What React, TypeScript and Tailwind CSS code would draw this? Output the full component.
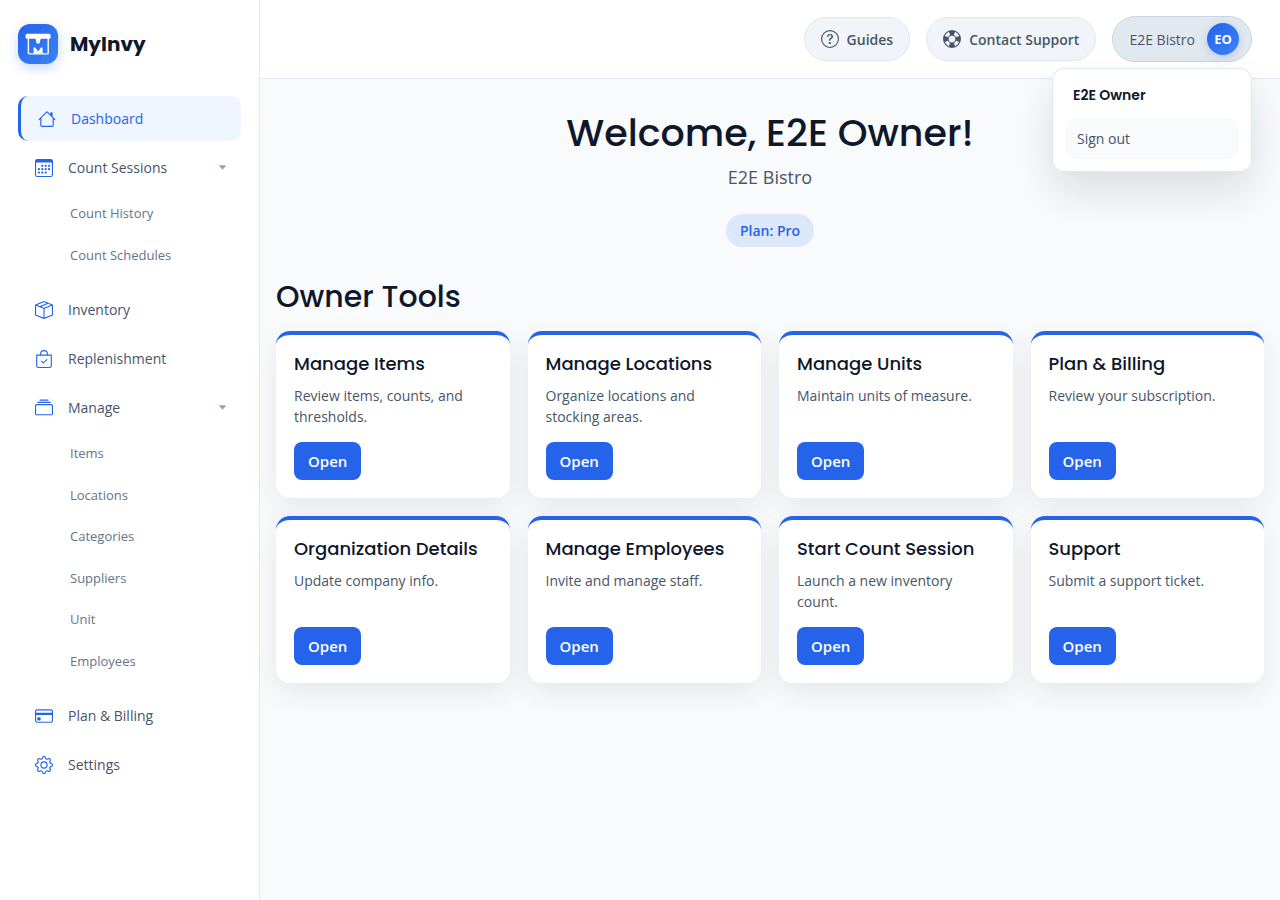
import type { ReactNode } from 'react';
import type { IconType } from 'react-icons';
import {
  BsBagCheck,
  BsBoxSeam,
  BsCalendar3,
  BsCaretDownFill,
  BsCollection,
  BsCreditCard,
  BsGear,
  BsHouse,
  BsLifePreserver,
  BsQuestionCircle,
} from 'react-icons/bs';

function Logo() {
  return (
    <span className="flex size-10 items-center justify-center rounded-xl bg-linear-to-br from-[#2563eb] to-[#3b82f6] shadow-[0_4px_12px_rgba(37,99,235,0.25)]">
      <svg viewBox="0 0 26 22" className="w-[26px]" aria-hidden="true">
        <rect x="0.6" y="0.8" width="25" height="4.9" rx="1.5" fill="#fff" />
        <rect x="3.4" y="4" width="19.8" height="16.9" rx="1" fill="none" stroke="#fff" strokeWidth="1.4" />
        <path fill="#fff" d="M10.3 5h5.6l-1.4 5.600h-2.800zM8.600 20.500V14.500h1.600l2.900 4 2.900-4h1.600v6z" />
      </svg>
    </span>
  );
}

function NavLink({ icon: Icon, label }: { icon: IconType; label: string }) {
  return (
    <a href="#" className="flex h-[45px] items-center gap-[15px] rounded-[10px] px-[17px] text-sm leading-[21px] font-medium text-[#475569]">
      <Icon className="size-[18px] text-[#2563eb]" />
      {label}
    </a>
  );
}

function NavGroup({ icon: Icon, label, items }: { icon: IconType; label: string; items: string[] }) {
  return (
    <div className="flex flex-col gap-1 pb-2">
      <button
        type="button"
        className="flex h-[45px] items-center gap-[15px] rounded-[10px] px-[17px] text-sm leading-[21px] font-medium text-[#475569]"
      >
        <Icon className="size-[18px] text-[#2563eb]" />
        {label}
        <BsCaretDownFill className="mr-[-3px] ml-auto size-[9px] text-[#94a3b8]" />
      </button>
      <ul className="flex flex-col gap-[2px]">
        {items.map((item) => (
          <li key={item}>
            <a href="#" className="block py-[10px] pl-[52px] text-[13px] leading-normal font-medium text-[#64748b]">
              {item}
            </a>
          </li>
        ))}
      </ul>
    </div>
  );
}

function Sidebar() {
  return (
    <aside className="w-[260px] shrink-0 border-r border-[#e2e8f0] bg-white px-[18px] py-6">
      <a href="#" className="flex items-center gap-3">
        <Logo />
        <span className="font-[Poppins,Inter,sans-serif] text-xl font-bold text-[#0f172a]">MyInvy</span>
      </a>
      <nav className="mt-8 flex flex-col gap-1">
        <a
          href="#"
          className="flex h-[45px] items-center gap-[15px] rounded-[10px] border-l-[3px] border-[#2563eb] bg-[#eff6ff] px-[17px] text-sm leading-[21px] font-medium text-[#2563eb]"
        >
          <BsHouse className="size-[18px]" />
          Dashboard
        </a>
        <NavGroup icon={BsCalendar3} label="Count Sessions" items={['Count History', 'Count Schedules']} />
        <NavLink icon={BsBoxSeam} label="Inventory" />
        <NavLink icon={BsBagCheck} label="Replenishment" />
        <NavGroup
          icon={BsCollection}
          label="Manage"
          items={['Items', 'Locations', 'Categories', 'Suppliers', 'Unit', 'Employees']}
        />
        <NavLink icon={BsCreditCard} label="Plan & Billing" />
        <NavLink icon={BsGear} label="Settings" />
      </nav>
    </aside>
  );
}

function PillLink({ icon: Icon, children }: { icon: IconType; children: ReactNode }) {
  return (
    <a
      href="#"
      className="flex h-[44px] items-center gap-2 rounded-full border border-[#e2e8f0] bg-[#f1f5f9] px-4 text-sm leading-[21px] font-semibold text-[#475569]"
    >
      <Icon className="size-[18px]" />
      {children}
    </a>
  );
}

function AccountMenu() {
  return (
    <div className="relative">
      <button
        type="button"
        aria-expanded="true"
        className="flex h-[46px] items-center gap-3 rounded-full border border-[#cbd5e1] bg-[#e2e8f0] pr-3 pl-4 text-sm leading-[21px] font-medium text-[#475569]"
      >
        E2E Bistro
        <span className="flex size-8 items-center justify-center rounded-full bg-linear-to-br from-[#2563eb] to-[#3b82f6] text-[13px] leading-5 font-bold text-white shadow-[0_2px_8px_rgba(37,99,235,0.25)]">
          EO
        </span>
      </button>
      <div className="absolute top-full right-0 z-10 mt-[6px] w-[200px] rounded-xl border border-[#e2e8f0] bg-white p-3 shadow-[0_20px_40px_rgba(15,23,42,0.12)]">
        <p className="px-2 pt-1 pb-3 font-[Poppins,Inter,sans-serif] text-sm leading-[21px] font-semibold text-[#0f172a]">E2E Owner</p>
        <button
          type="button"
          className="flex h-[41px] w-full items-center rounded-[10px] bg-[#f8fafc] px-3 text-sm leading-[21px] font-medium text-[#475569]"
        >
          Sign out
        </button>
      </div>
    </div>
  );
}

const tools = [
  { title: 'Manage Items', text: 'Review items, counts, and thresholds.' },
  { title: 'Manage Locations', text: 'Organize locations and stocking areas.' },
  { title: 'Manage Units', text: 'Maintain units of measure.' },
  { title: 'Plan & Billing', text: 'Review your subscription.' },
  { title: 'Organization Details', text: 'Update company info.' },
  { title: 'Manage Employees', text: 'Invite and manage staff.' },
  { title: 'Start Count Session', text: 'Launch a new inventory count.' },
  { title: 'Support', text: 'Submit a support ticket.' },
];

function ToolCard({ title, text }: { title: string; text: string }) {
  return (
    <article className="flex flex-col items-start rounded-[14px] border-t-4 border-[#2563eb] bg-white p-[18px] shadow-[0_10px_30px_rgba(15,23,42,0.08)]">
      <h3 className="font-[Poppins,Inter,sans-serif] text-lg leading-[22px] font-medium text-[#0f172a]">{title}</h3>
      <p className="mt-[10px] mb-[15px] text-sm leading-[21px] text-[#475569]">{text}</p>
      <a href="#" className="mt-auto flex h-[38px] items-center rounded-lg bg-[#2563eb] px-[14px] text-[15px] font-semibold text-white">
        Open
      </a>
    </article>
  );
}

export default function App() {
  return (
    <div className="flex min-h-screen bg-[#f8fafc] font-['Open_Sans','Noto_Sans',sans-serif] text-[#475569]">
      <Sidebar />
      <div className="min-w-0 flex-1">
        <header className="flex h-[79px] items-center justify-end gap-4 border-b border-[#e2e8f0] bg-white px-7">
          <PillLink icon={BsQuestionCircle}>Guides</PillLink>
          <PillLink icon={BsLifePreserver}>Contact Support</PillLink>
          <AccountMenu />
        </header>
        <main className="px-4 pt-7 pb-8">
          <div className="flex flex-col items-center text-center">
            <h1 className="font-[Poppins,Inter,sans-serif] text-[38px] leading-[52px] font-medium text-[#0f172a]">Welcome, E2E Owner!</h1>
            <p className="mt-1 text-lg leading-7">E2E Bistro</p>
            <span className="mt-[23px] flex h-[33px] items-center rounded-full bg-[#dce7fa] px-[14px] text-sm font-semibold text-[#2563eb]">
              Plan: Pro
            </span>
          </div>
          <section>
            <h2 className="mt-[30px] font-[Poppins,Inter,sans-serif] text-[30px] leading-10 font-medium text-[#0f172a]">Owner Tools</h2>
            <div className="mt-[14px] grid grid-cols-[repeat(auto-fill,minmax(220px,1fr))] gap-[18px]">
              {tools.map((tool) => (
                <ToolCard key={tool.title} title={tool.title} text={tool.text} />
              ))}
            </div>
          </section>
        </main>
      </div>
    </div>
  );
}
